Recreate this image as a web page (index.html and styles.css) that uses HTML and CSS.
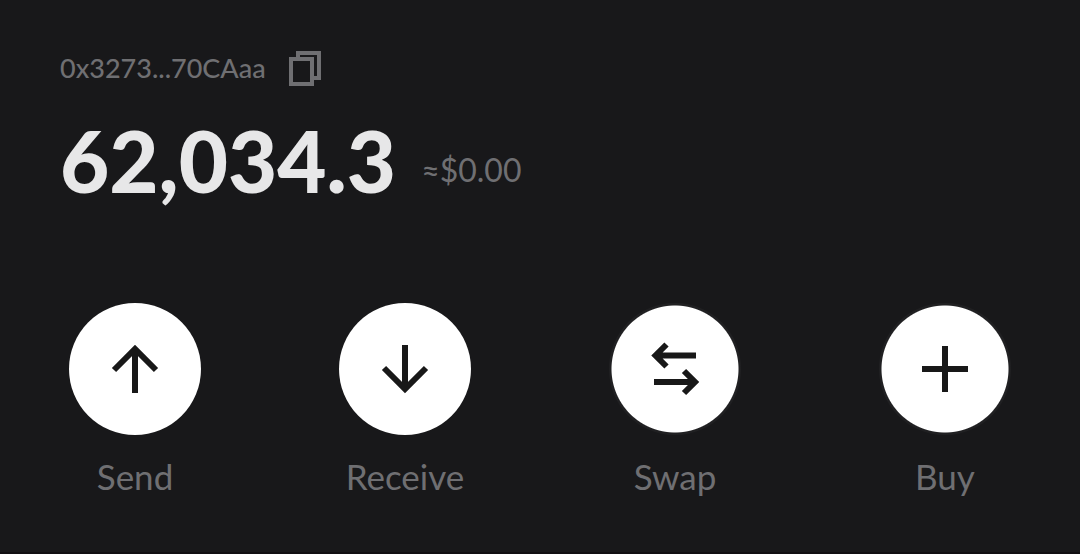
FILE: index.html
```html
<!DOCTYPE html>
<html lang="en">
<head>
<meta charset="utf-8">
<meta name="viewport" content="width=device-width, initial-scale=1">
<title>Wallet</title>
<link rel="stylesheet" href="styles.css">
</head>
<body>
<main class="wallet">
  <header class="account">
    <span class="address">0x3273...70CAaa</span>
    <button class="copy" type="button" aria-label="Copy address">
      <svg width="34" height="36" viewBox="0 0 34 36" fill="none" stroke="currentColor" stroke-width="4">
        <path d="M3 8h21v25H3zM10 8V2h21v25h-7"/>
      </svg>
    </button>
  </header>
  <section class="balance">
    <h1 class="amount">62,034.3</h1>
    <span class="fiat">≈$0.00</span>
  </section>
  <nav class="actions">
    <button class="action" type="button">
      <span class="disc"><svg width="132" height="132" viewBox="0 0 132 132"><path d="M66 90V46M45 67l21-21 21 21"/></svg></span>
      <span class="label">Send</span>
    </button>
    <button class="action" type="button">
      <span class="disc"><svg width="132" height="132" viewBox="0 0 132 132"><path d="M66 42v44M45 65l21 21 21-21"/></svg></span>
      <span class="label">Receive</span>
    </button>
    <button class="action" type="button">
      <span class="disc ringed"><svg width="132" height="132" viewBox="0 0 132 132"><path d="M87 52.500H46M57.500 41.500l-11 11 11 11M45 79h41M75 68l11 11-11 11"/></svg></span>
      <span class="label">Swap</span>
    </button>
    <button class="action" type="button">
      <span class="disc ringed"><svg width="132" height="132" viewBox="0 0 132 132"><path d="M66 43v46M43 66h46"/></svg></span>
      <span class="label">Buy</span>
    </button>
  </nav>
</main>
</body>
</html>
```
FILE: styles.css
```css
* {
  box-sizing: border-box;
}

body {
  margin: 0;
  background: #18181a;
  color: #6f6f72;
  font-family: Lato, "Noto Sans", sans-serif;
}

button {
  padding: 0;
  border: 0;
  background: none;
  color: inherit;
  font: inherit;
  cursor: pointer;
}

svg {
  display: block;
}

.wallet {
  min-height: 100vh;
  padding-top: 48px;
  border-bottom: 2px solid #110f12;
}

.account {
  display: flex;
  align-items: center;
  gap: 22px;
  padding: 0 60px;
}

.address {
  font-size: 27px;
  font-weight: 500;
  line-height: 40px;
}

.copy {
  padding-top: 2px;
}

.balance {
  display: flex;
  align-items: center;
  gap: 25px;
  padding: 20px 60px 0;
}

.amount {
  margin: 0;
  color: #e7e7e8;
  font-size: 85px;
  font-weight: 900;
  line-height: 104px;
}

.fiat {
  padding-top: 20px;
  font-size: 32px;
  line-height: 40px;
}

.actions {
  display: grid;
  grid-template-columns: repeat(4, 1fr);
  padding: 91px 0 48px;
}

.action {
  display: flex;
  flex-direction: column;
  align-items: center;
  gap: 19px;
}

.disc {
  border-radius: 50%;
  background: #fff;
}

.disc path {
  fill: none;
  stroke: #181818;
  stroke-width: 6;
}

.ringed {
  background: radial-gradient(circle closest-side, #fff 63px, #202022 64px);
}

.label {
  font-size: 35px;
  line-height: 44px;
}
```
